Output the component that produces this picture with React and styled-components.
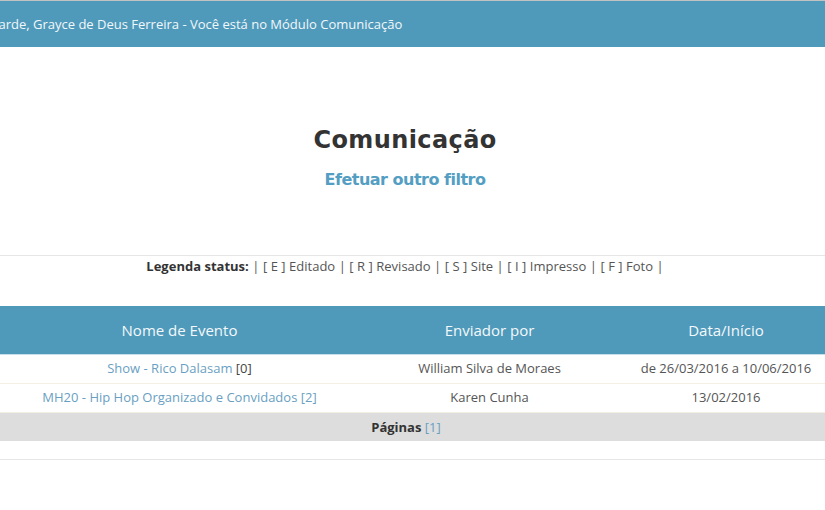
import React from 'react';
import styled, { createGlobalStyle } from 'styled-components';

const GlobalStyle = createGlobalStyle`
  html, body {
    margin: 0;
    padding: 0;
    background: #fff;
    overflow-x: hidden;
  }

  body {
    font-family: 'Open Sans', 'Liberation Sans', sans-serif;
    font-size: 13px;
    color: #555;
  }
`;

const events = [
  { name: 'Show - Rico Dalasam', count: 0, sender: 'William Silva de Moraes', date: 'de 26/03/2016 a 10/06/2016' },
  { name: 'MH20 - Hip Hop Organizado e Convidados', count: 2, sender: 'Karen Cunha', date: '13/02/2016' },
];

const legend = [
  ['E', 'Editado'],
  ['R', 'Revisado'],
  ['S', 'Site'],
  ['I', 'Impresso'],
  ['F', 'Foto'],
];

const App = () => {
  return (
    <>
      <GlobalStyle />
      <TopBar>
        <Greeting>Boa tarde, Grayce de Deus Ferreira - Você está no Módulo Comunicação</Greeting>
      </TopBar>
      <Intro>
        <Title>Comunicação</Title>
        <FilterLink href="#">Efetuar outro filtro</FilterLink>
      </Intro>
      <Legend>
        <LegendText>
          <strong>Legenda status:</strong> |{' '}
          {legend.map(([code, label]) => (
            <React.Fragment key={code}>
              [ {code} ] {label} |{' '}
            </React.Fragment>
          ))}
        </LegendText>
      </Legend>
      <Table>
        <colgroup>
          <col style={{ width: 359 }} />
          <col style={{ width: 261 }} />
          <col style={{ width: 212 }} />
        </colgroup>
        <thead>
          <tr>
            <HeadCell>Nome de Evento</HeadCell>
            <HeadCell>Enviador por</HeadCell>
            <HeadCell>Data/Início</HeadCell>
          </tr>
        </thead>
        <tbody>
          {events.map((ev) => (
            <Row key={ev.name}>
              <Cell>
                <EventLink href="#">{ev.name}</EventLink>{' '}
                <Count $active={ev.count > 0}>[{ev.count}]</Count>
              </Cell>
              <Cell>{ev.sender}</Cell>
              <Cell>{ev.date}</Cell>
            </Row>
          ))}
          <tr>
            <PagerCell colSpan={3}>
              <strong>Páginas</strong> <PageLink href="#">[1]</PageLink>
            </PagerCell>
          </tr>
          <tr>
            <SpacerCell colSpan={3} />
          </tr>
        </tbody>
      </Table>
    </>
  );
};

const TopBar = styled.header`
  border-top: 1px solid #c2c2c2;
  background: #4f9aba;
  height: 46px;
  display: flex;
  align-items: center;
  overflow: hidden;
  white-space: nowrap;
`;

const Greeting = styled.span`
  margin-left: -33px;
  color: #f2f7fa;
  font-size: 13px;
`;

const Intro = styled.section`
  width: 810px;
  padding-top: 79px;
  height: 129px;
  display: flex;
  flex-direction: column;
  align-items: center;
`;

const Title = styled.h1`
  margin: 0;
  font-family: 'DejaVu Sans', 'Liberation Sans', sans-serif;
  font-size: 24px;
  font-weight: bold;
  line-height: 28px;
  color: #333;
  letter-spacing: 0.4px;
`;

const FilterLink = styled.a`
  margin-top: 16px;
  font-family: 'DejaVu Sans', 'Liberation Sans', sans-serif;
  font-size: 16px;
  font-weight: bold;
  line-height: 20px;
  color: #539ec2;
  text-decoration: none;
  letter-spacing: -0.5px;
`;

const Legend = styled.section`
  border-top: 1px solid #e6e6e6;
  height: 50px;
`;

const LegendText = styled.p`
  width: 810px;
  margin: 0;
  padding-top: 1px;
  line-height: 18px;
  text-align: center;
  word-spacing: 0.1px;

  strong {
    color: #333;
  }
`;

const Table = styled.table`
  width: 832px;
  border-collapse: collapse;
  table-layout: fixed;
`;

const HeadCell = styled.th`
  height: 48px;
  padding: 0;
  background: #4f9aba;
  border-bottom: 1px solid #c8dfea;
  color: #f4f8fa;
  font-size: 15px;
  font-weight: normal;
  text-align: center;
`;

const Row = styled.tr`
  border-bottom: 1px solid #f3efe3;
`;

const Cell = styled.td`
  height: 26px;
  padding: 0 0 2px;
  text-align: center;
  vertical-align: middle;
`;

const EventLink = styled.a`
  color: #6a9fc2;
  text-decoration: none;
`;

const Count = styled.span`
  color: ${(p) => (p.$active ? '#6a9fc2' : '#444')};
`;

const PagerCell = styled.td`
  height: 28px;
  padding: 0 20px 0 0;
  background: #dddddd;
  text-align: center;

  strong {
    color: #333;
  }
`;

const PageLink = styled.a`
  color: #6a9fc2;
  text-decoration: none;
`;

const SpacerCell = styled.td`
  height: 18px;
  padding: 0;
  border-bottom: 1px solid #e6e6e6;
`;

export default App;
